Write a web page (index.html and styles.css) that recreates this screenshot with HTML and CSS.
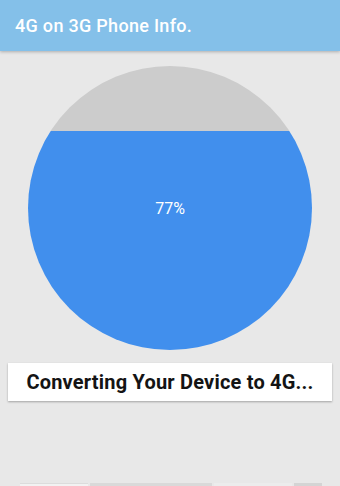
FILE: index.html
```html
<!DOCTYPE html>
<html>
<head>
<meta charset="utf-8">
<link rel="stylesheet" href="styles.css">
</head>
<body>
<div class="page">
  <header class="appbar">4G on 3G Phone Info.</header>
  <main class="content">
    <div class="gauge"><span class="gauge-label">77%</span></div>
    <div class="status-card">Converting Your Device to 4G...</div>
  </main>
  <div class="ad-strip">
    <span class="seg seg-a"></span>
    <span class="seg seg-b"></span>
    <span class="seg seg-c"></span>
    <span class="seg seg-d"></span>
  </div>
</div>
</body>
</html>
```

FILE: styles.css
```css
html, body {
  margin: 0;
  padding: 0;
  background: #e8e8e8;
}
.page {
  width: 340px;
  height: 486px;
  display: flex;
  flex-direction: column;
  overflow: hidden;
  font-family: Roboto, "Liberation Sans", sans-serif;
}
.appbar {
  height: 51px;
  flex: none;
  box-sizing: border-box;
  padding: 0 15px;
  display: flex;
  align-items: center;
  background: #84c0e9;
  color: #ffffff;
  font-size: 18px;
  letter-spacing: 0.3px;
  font-weight: 500;
  box-shadow: 0 1px 3px rgba(0,0,0,0.25);
  position: relative;
  z-index: 1;
}
.content {
  display: flex;
  flex-direction: column;
  align-items: center;
  padding-top: 15px;
}
.gauge {
  width: 284px;
  height: 284px;
  border-radius: 50%;
  background: linear-gradient(#cccccc 0 65px, #418fed 65px 100%);
  display: flex;
  align-items: center;
  justify-content: center;
}
.gauge-label {
  color: #ffffff;
  font-size: 16px;
  margin-top: 1px;
}
.status-card {
  align-self: stretch;
  margin: 13px 8px 0;
  height: 38px;
  background: #ffffff;
  box-shadow: 0 1px 2px rgba(0,0,0,0.3);
  display: flex;
  align-items: center;
  justify-content: center;
  font-size: 20px;
  letter-spacing: 0.2px;
  font-weight: 700;
  color: #141414;
}
.ad-strip {
  margin-top: auto;
  height: 3px;
  display: flex;
  padding-left: 20px;
  gap: 2px;
}
.seg { display: block; height: 3px; }
.seg-a { width: 68px; background: #f2f2f2; border-top: 1px solid #dcdcdc; box-sizing: border-box; }
.seg-b { width: 122px; background: #d9d9d9; }
.seg-c { width: 78px; background: #ececec; }
.seg-d { width: 28px; background: #d4d4d4; }
```
